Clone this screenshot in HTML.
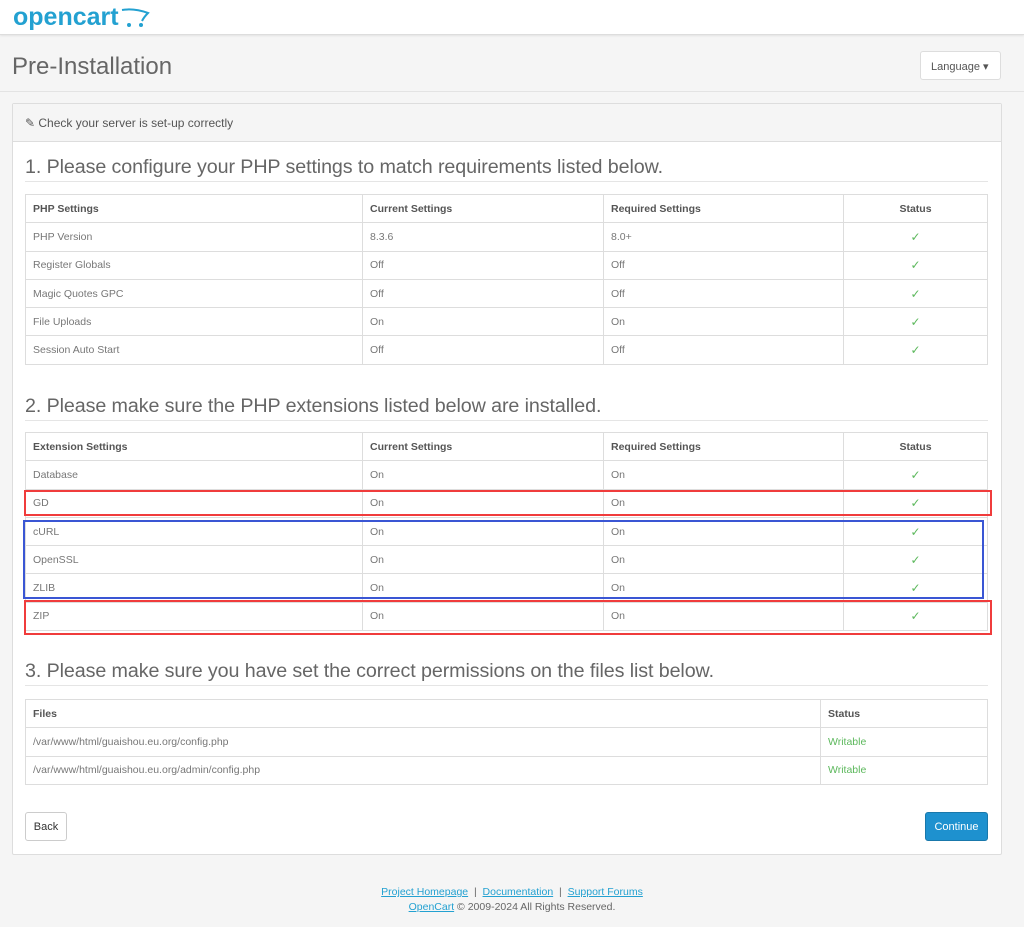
<!DOCTYPE html>
<html><head><meta charset="utf-8"><style>
*{box-sizing:border-box;margin:0;padding:0}
body{width:1024px;height:927px;background:#f5f5f5;font-family:"Liberation Sans",sans-serif;color:#666;font-size:11px;position:relative;overflow:hidden}
.top{position:absolute;left:0;top:0;width:1024px;height:35px;background:#fff;border-bottom:1px solid #ddd;box-shadow:0 1px 2px rgba(0,0,0,.08)}
.logo{position:absolute;left:13px;top:3px;font-size:25px;font-weight:bold;color:#23a1d1;letter-spacing:0px}
.ph{position:absolute;left:0;top:36px;width:1024px;height:56px;border-bottom:1px solid #e3e3e3}
.ph h1{position:absolute;left:12px;top:17px;font-size:24px;font-weight:normal;color:#666}
.lang{position:absolute;left:920px;top:51px;width:81px;height:29px;background:#fff;border:1px solid #ddd;border-radius:3px;font-size:11px;color:#555;padding:8px 0 0 10px}
.panel{position:absolute;left:12px;top:103px;width:990px;height:752px;background:#fff;border:1px solid #ddd;border-radius:2px}
.phd{height:38px;background:#f5f5f5;border-bottom:1px solid #ddd;padding:12px 0 0 12px;font-size:12px;color:#555}
h3{position:absolute;left:25px;width:963px;font-size:19.7px;font-weight:normal;color:#666;border-bottom:1px solid #e5e5e5;height:26px;letter-spacing:-0.1px}
table{position:absolute;left:25px;width:963px;border-collapse:collapse}
td,th{border:1px solid #ddd;height:28.3px;padding:0 7px;text-align:left;font-size:10.5px;color:#777}
th{font-weight:bold;color:#555}
.c{text-align:center}
.ok{color:#5cb85c;font-size:12px}
.w{color:#5cb85c}
.box{position:absolute;border:2px solid}
.btn{position:absolute;top:812px;height:29px;border-radius:3px;font-size:11px;padding-top:8px;text-align:center}
.foot{position:absolute;left:0;width:1024px;text-align:center;font-size:10.5px;color:#666}
.foot a{color:#23a1d1;text-decoration:underline}
</style></head><body>
<div class="top"><div class="logo">opencart</div></div>
<svg style="position:absolute;left:120px;top:4px" width="34" height="24"><path d="M2 6 Q14 4 28 9 Q24 13 22 17" stroke="#23a1d1" stroke-width="2" fill="none"/><circle cx="9" cy="21" r="2" fill="#23a1d1"/><circle cx="21" cy="21" r="2" fill="#23a1d1"/></svg>
<div class="ph"><h1>Pre-Installation</h1></div>
<div class="lang">Language ▾</div>
<div class="panel"><div class="phd">✎ Check your server is set-up correctly</div></div>
<h3 style="top:156px">1. Please configure your PHP settings to match requirements listed below.</h3>
<table style="top:194px">
<tr><th style="width:337px">PHP Settings</th><th style="width:241px">Current Settings</th><th style="width:240px">Required Settings</th><th class="c">Status</th></tr>
<tr><td>PHP Version</td><td>8.3.6</td><td>8.0+</td><td class="c ok">✓</td></tr>
<tr><td>Register Globals</td><td>Off</td><td>Off</td><td class="c ok">✓</td></tr>
<tr><td>Magic Quotes GPC</td><td>Off</td><td>Off</td><td class="c ok">✓</td></tr>
<tr><td>File Uploads</td><td>On</td><td>On</td><td class="c ok">✓</td></tr>
<tr><td>Session Auto Start</td><td>Off</td><td>Off</td><td class="c ok">✓</td></tr>
</table>
<h3 style="top:395px">2. Please make sure the PHP extensions listed below are installed.</h3>
<table style="top:432px">
<tr><th style="width:337px">Extension Settings</th><th style="width:241px">Current Settings</th><th style="width:240px">Required Settings</th><th class="c">Status</th></tr>
<tr><td>Database</td><td>On</td><td>On</td><td class="c ok">✓</td></tr>
<tr><td>GD</td><td>On</td><td>On</td><td class="c ok">✓</td></tr>
<tr><td>cURL</td><td>On</td><td>On</td><td class="c ok">✓</td></tr>
<tr><td>OpenSSL</td><td>On</td><td>On</td><td class="c ok">✓</td></tr>
<tr><td>ZLIB</td><td>On</td><td>On</td><td class="c ok">✓</td></tr>
<tr><td>ZIP</td><td>On</td><td>On</td><td class="c ok">✓</td></tr>
</table>
<div class="box" style="left:24px;top:490px;width:968px;height:26px;border-color:#f03c3c"></div>
<div class="box" style="left:23px;top:520px;width:961px;height:79px;border-color:#3a56d4"></div>
<div class="box" style="left:24px;top:600px;width:968px;height:35px;border-color:#f03c3c"></div>
<h3 style="top:660px">3. Please make sure you have set the correct permissions on the files list below.</h3>
<table style="top:699px">
<tr><th style="width:795px">Files</th><th>Status</th></tr>
<tr><td>/var/www/html/guaishou.eu.org/config.php</td><td class="w">Writable</td></tr>
<tr><td>/var/www/html/guaishou.eu.org/admin/config.php</td><td class="w">Writable</td></tr>
</table>
<div class="btn" style="left:25px;width:42px;background:#fff;border:1px solid #ccc;color:#333">Back</div>
<div class="btn" style="left:925px;width:63px;background:#1e91cf;border:1px solid #1978ab;color:#fff">Continue</div>
<div class="foot" style="top:886px"><a>Project Homepage</a> &nbsp;|&nbsp; <a>Documentation</a> &nbsp;|&nbsp; <a>Support Forums</a></div>
<div class="foot" style="top:901px"><a>OpenCart</a> © 2009-2024 All Rights Reserved.</div>
</body></html>
